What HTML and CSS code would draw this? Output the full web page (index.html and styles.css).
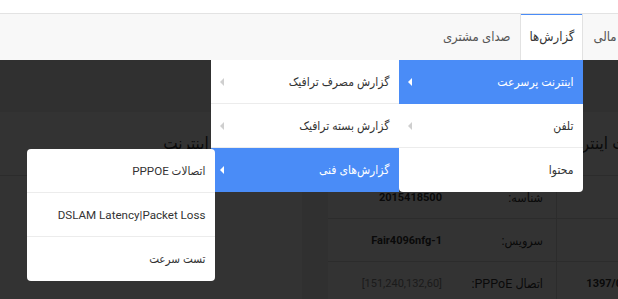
FILE: index.html
```html
<!DOCTYPE html>
<html lang="fa" dir="rtl">
<head>
<meta charset="utf-8">
<title>گزارش‌ها</title>
<link rel="stylesheet" href="styles.css">
</head>
<body>
<div class="topbar"></div>
<nav class="nav">
  <ul class="tabs">
    <li class="tab">گزارش مالی</li>
    <li class="tab tab-active">گزارش‌ها
      <ul class="menu menu-1">
        <li class="item item-active"><span class="label">اینترنت پرسرعت</span><span class="caret"></span>
          <ul class="menu menu-2">
            <li class="item"><span class="label">گزارش مصرف ترافیک</span><span class="caret"></span></li>
            <li class="item"><span class="label">گزارش بسته ترافیک</span><span class="caret"></span></li>
            <li class="item item-active"><span class="label">گزارش‌های فنی</span><span class="caret"></span>
              <ul class="menu menu-3">
                <li class="item"><span class="label">اتصالات PPPOE</span></li>
                <li class="item"><span class="label">DSLAM Latency|Packet Loss</span></li>
                <li class="item"><span class="label">تست سرعت</span></li>
              </ul>
            </li>
          </ul>
        </li>
        <li class="item"><span class="label">تلفن</span><span class="caret"></span></li>
        <li class="item"><span class="label">محتوا</span></li>
      </ul>
    </li>
    <li class="tab">صدای مشتری</li>
  </ul>
</nav>
<main class="main">
  <section class="panel panel-right">
    <div class="panel-head">اطلاعات اینترنت</div>
    <div class="grid">
      <div class="cell lbl">نوع سرویس:</div>
      <div class="cell val sep">فردی</div>
      <div class="cell lbl">شناسه:</div>
      <div class="cell val">2015418500</div>

      <div class="cell lbl"></div>
      <div class="cell val sep"></div>
      <div class="cell lbl">سرویس:</div>
      <div class="cell val">Fair4096nfg-1</div>

      <div class="cell lbl">تاریخ:</div>
      <div class="cell val sep">1397/02/15</div>
      <div class="cell lbl">اتصال PPPoE:</div>
      <div class="cell val muted">[151,240,132,60]</div>
    </div>
  </section>
  <section class="panel panel-left">
    <div class="panel-head">سرویس‌های اینترنت</div>
  </section>
  <div class="backdrop"></div>
</main>
</body>
</html>
```
FILE: styles.css
```css
html, body {
  margin: 0;
  padding: 0;
  overflow: hidden;
}
body {
  direction: rtl;
  font-family: Roboto, "DejaVu Sans Condensed", "DejaVu Sans", sans-serif;
  font-size: 12px;
  color: #333;
  background: #eeeeee;
  width: 618px;
  height: 299px;
}
.topbar {
  height: 13px;
  background: #fff;
  border-bottom: 1px solid #e3e3e3;
}
.nav {
  height: 46px;
  background: #f8f8f8;
}
.tabs {
  list-style: none;
  margin: 0 -47px 0 0;
  padding: 0;
  display: flex;
  height: 46px;
}
.tab {
  padding: 0 10px;
  line-height: 46px;
  font-size: 13px;
  color: #555;
}
.tab-active {
  position: relative;
  background: #fff;
  color: #333;
  padding: 0 8px;
  border-left: 1px solid #e2e2e2;
  border-right: 1px solid #e2e2e2;
  box-shadow: inset 0 1px 0 #4a8cf7;
}
.menu {
  list-style: none;
  margin: 0;
  padding: 0;
  background: #fff;
  position: absolute;
  z-index: 10;
  line-height: normal;
  font-size: 12px;
}
.menu-1 {
  top: 100%;
  right: -1px;
  width: 184px;
  border-radius: 0 0 4px 4px;
}
.menu-2 {
  top: 0;
  right: 100%;
  width: 188px;
}
.menu-3 {
  top: 1px;
  right: calc(100% - 4px);
  width: 188px;
  border-radius: 4px;
  overflow: hidden;
}
.menu-3 .item {
  font-size: 11.6px;
}
.item {
  position: relative;
  height: 44px;
  box-sizing: border-box;
  padding: 0 10px 0 9px;
  display: flex;
  align-items: center;
  justify-content: space-between;
  color: #333;
  border-bottom: 1px solid #ececec;
}
.item:last-child {
  border-bottom: none;
}
.item-active {
  background: #4a8cf7;
  color: #fff;
  border-bottom-color: #4a8cf7;
}
.caret {
  width: 0;
  height: 0;
  border-top: 4px solid transparent;
  border-bottom: 4px solid transparent;
  border-right: 4px solid #cfcfcf;
}
.item-active > .caret {
  border-right-color: #fff;
}
.main {
  position: relative;
  display: flex;
  gap: 26px;
  padding-top: 52px;
  height: 239px;
  box-sizing: border-box;
}
.panel {
  background: #fff;
}
.panel-right {
  flex: 0 0 410px;
  margin-right: -120px;
}
.panel-left {
  flex: 1;
}
.panel-head {
  height: 64px;
  box-sizing: border-box;
  border-bottom: 1px solid #dddddd;
  font-size: 17px;
  line-height: 62px;
  color: #333;
}
.panel-right .panel-head {
  padding-right: 72px;
}
.panel-left .panel-head {
  padding-right: 12px;
}
.grid {
  display: grid;
  grid-template-columns: 80px 102px 101px 127px;
  grid-auto-rows: 43px;
}
.cell {
  padding-right: 13px;
  display: flex;
  align-items: center;
  border-bottom: 1px solid #dddddd;
  font-size: 12.5px;
}
.val {
  font-weight: bold;
  font-size: 11px;
}
.sep {
  border-left: 1px solid #dddddd;
}
.muted {
  font-weight: normal;
  color: #888;
}
.backdrop {
  position: absolute;
  inset: 0;
  background: rgba(0, 0, 0, 0.8);
  z-index: 5;
}
```
